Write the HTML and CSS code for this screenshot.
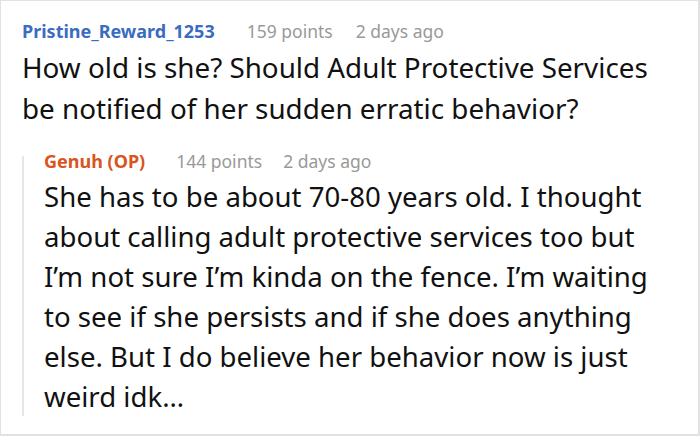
FILE: index.html
```html
<!DOCTYPE html>
<html>
<head>
<meta charset="utf-8">
<link rel="stylesheet" href="styles.css">
</head>
<body>
<div class="frame">
  <div class="comment">
    <div class="meta">
      <span class="author">Pristine_Reward_1253</span>
      <span class="info">159 points</span>
      <span class="info">2 days ago</span>
    </div>
    <p class="text">How old is she? Should Adult Protective Services be notified of her sudden erratic behavior?</p>
    <div class="reply">
      <div class="meta">
        <span class="author op">Genuh (OP)</span>
        <span class="info">144 points</span>
        <span class="info">2 days ago</span>
      </div>
      <p class="text">She has to be about 70-80 years old. I thought about calling adult protective services too but I’m not sure I’m kinda on the fence. I’m waiting to see if she persists and if she does anything else. But I do believe her behavior now is just weird idk…</p>
    </div>
  </div>
</div>
</body>
</html>
```
FILE: styles.css
```css
html, body {
  margin: 0;
  padding: 0;
  background: #fff;
}
.frame {
  width: 700px;
  height: 436px;
  box-sizing: border-box;
  border: 1px solid #e2e2e2;
  border-right-width: 2px;
  border-bottom-width: 2px;
  overflow: hidden;
  font-family: "Noto Sans", sans-serif;
  color: #111;
}
.comment {
  padding: 15px 20px 0 21px;
}
.meta {
  display: flex;
  align-items: baseline;
  gap: 23px;
  font-size: 17.5px;
  line-height: 30px;
}
.author {
  font-weight: bold;
  font-size: 18px;
  color: #3a6dbf;
  margin-right: 9px;
}
.info {
  color: #999;
}
.text {
  margin: 1px 0 0;
  font-size: 27.8px;
  line-height: 41px;
}
.reply {
  margin-top: 17px;
  padding-left: 22px;
  background: linear-gradient(#e6e6e6, #e6e6e6) no-repeat 0 10px / 2px calc(100% - 9px);
}
.reply .meta {
  gap: 21px;
}
.reply .author {
  color: #d9541f;
  margin-right: 10px;
}
.reply .text {
  margin: 0;
  font-size: 27.6px;
  line-height: 40px;
}
```
